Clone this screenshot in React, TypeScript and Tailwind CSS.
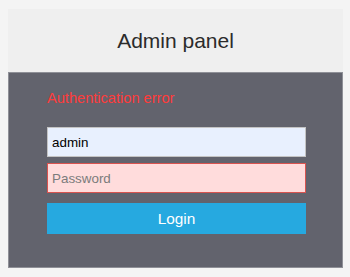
export default function App() {
  return (
    <div className="min-h-[277px] w-[350px] bg-[#f4f4f4] pt-[9px] pl-[8px] font-['Liberation_Sans',Arial,sans-serif]">
      <div className="w-[335px]">
        <div className="h-[63px] bg-[#efefef] flex items-center justify-center">
          <h1 className="text-[21px] text-[#2b2b2b] leading-none pb-[1px]">Admin panel</h1>
        </div>
        <div className="h-[196px] bg-[#62636d] border border-[#8f9097] px-[38px] pt-[16px]">
          <p className="text-[14.6px] leading-[18px] text-[#ff3b3b]">Authentication error</p>
          <form className="mt-[20px] w-[259px] space-y-[6px]">
            <input
              className="block w-full h-[30px] px-[4px] bg-[#e8f0fe] border border-[#c4c4c4] text-[13.4px] text-black outline-none"
              defaultValue="admin"
            />
            <input
              type="password"
              className="block w-full h-[30px] px-[4px] bg-[#ffdcdc] border border-[#d9534f] text-[13.4px] text-black placeholder:text-[#7b7b7b] outline-none"
              placeholder="Password"
            />
            <button
              type="button"
              className="block w-full h-[31px] !mt-[10px] bg-[#26a9e0] text-white text-[15.4px] leading-none"
            >
              Login
            </button>
          </form>
        </div>
      </div>
    </div>
  );
}
